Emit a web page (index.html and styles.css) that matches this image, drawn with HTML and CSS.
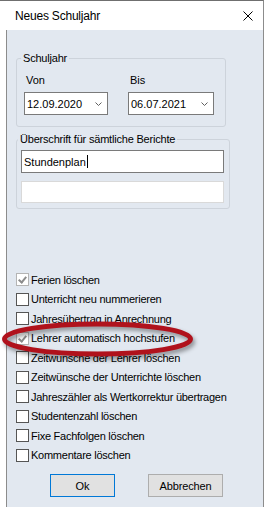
FILE: index.html
```html
<!DOCTYPE html>
<html lang="de">
  <head>
    <meta charset="UTF-8" />
    <meta name="viewport" content="width=device-width, initial-scale=1.0" />
    <title>Neues Schuljahr</title>
    <link rel="stylesheet" href="styles.css">
  </head>
  <body>
    <div class="window">
      <div class="titlebar">
        <span class="title">Neues Schuljahr</span>
        <svg class="close" width="10" height="10" viewBox="0 0 10 10">
          <path d="M0.5 0.5 L9.5 9.5 M9.5 0.5 L0.5 9.5" stroke="#000" stroke-width="1" fill="none" />
        </svg>
      </div>

      <div class="client">
        <fieldset class="group group-year">
          <legend>Schuljahr</legend>
          <div class="dates">
            <div class="date-field">
              <span class="caption">Von</span>
              <div class="combo combo-from">
                <span class="combo-text">12.09.2020</span>
                <span class="combo-arrow">
                  <svg width="7" height="4" viewBox="0 0 7 4"><path d="M0.5 0.5 L3.5 3.5 L6.5 0.5" stroke="#606060" fill="none" /></svg>
                </span>
              </div>
            </div>
            <div class="date-field">
              <span class="caption">Bis</span>
              <div class="combo combo-to">
                <span class="combo-text">06.07.2021</span>
                <span class="combo-arrow">
                  <svg width="7" height="4" viewBox="0 0 7 4"><path d="M0.5 0.5 L3.5 3.5 L6.5 0.5" stroke="#606060" fill="none" /></svg>
                </span>
              </div>
            </div>
          </div>
        </fieldset>

        <fieldset class="group group-heading">
          <legend>Überschrift für sämtliche Berichte</legend>
          <div class="textbox">Stundenplan<span class="caret"></span></div>
          <div class="textbox textbox-off"></div>
        </fieldset>

        <ul class="options">
          <li><span class="box box-checked"></span>Ferien löschen</li>
          <li><span class="box"></span>Unterricht neu nummerieren</li>
          <li><span class="box"></span>Jahresübertrag in Anrechnung</li>
          <li><span class="box box-checked"></span>Lehrer automatisch hochstufen</li>
          <li><span class="box"></span>Zeitwünsche der Lehrer löschen</li>
          <li><span class="box"></span>Zeitwünsche der Unterrichte löschen</li>
          <li><span class="box"></span>Jahreszähler als Wertkorrektur übertragen</li>
          <li><span class="box"></span>Studentenzahl löschen</li>
          <li><span class="box"></span>Fixe Fachfolgen löschen</li>
          <li><span class="box"></span>Kommentare löschen</li>
        </ul>

        <div class="buttons">
          <button type="button" class="btn btn-default">Ok</button>
          <button type="button" class="btn btn-cancel">Abbrechen</button>
        </div>
      </div>

      <!-- red marker drawn over the dialog -->
      <svg class="marker" width="200" height="46" viewBox="0 0 200 46">
        <ellipse cx="97.5" cy="21" rx="93" ry="15" fill="none" stroke="#b0121c" stroke-width="5" />
      </svg>
    </div>
  </body>
</html>
```

FILE: styles.css
```css
* {
  box-sizing: border-box;
}
body {
  margin: 0;
  background-color: #fff;
  font-family: "Liberation Sans", Arial, sans-serif;
  font-size: 11px;
  color: #000;
}
.window {
  position: relative;
  width: 264px;
  height: 507px;
  border-top: 1px solid #6f6f6f;
  border-right: 1px solid #8c8c8c;
  display: flex;
  flex-direction: column;
  overflow: hidden;
}
.titlebar {
  height: 29px;
  display: flex;
  align-items: center;
  justify-content: space-between;
  padding: 0 10px 0 15px;
  background-color: #fff;
}
.title {
  font-size: 12px;
  letter-spacing: -0.2px;
}
.close {
  display: block;
  margin-top: 1px;
}
.client {
  flex: 1;
  margin-left: 6px;
  border-left: 1px solid #8c8c8c;
  background-color: #e2e8f0;
}

/* group boxes */
.group {
  margin: 0 0 0 9px;
  border: 1px solid #cdd3db;
  border-radius: 3px;
  padding: 0 7px;
  min-width: 0;
}
.group legend {
  margin-left: -3px;
  padding: 0 2px;
  line-height: 13px;
  letter-spacing: -0.2px;
}
.group-year {
  width: 210px;
  margin-top: 22px;
  padding-top: 9px;
  padding-bottom: 11px;
}
.dates {
  display: flex;
  gap: 20px;
}
.date-field {
  display: flex;
  flex-direction: column;
  gap: 5px;
}
.caption {
  margin-left: 2px;
  line-height: 13px;
}
.combo {
  height: 23px;
  display: flex;
  align-items: center;
  justify-content: space-between;
  padding-left: 2px;
  border: 1px solid #7a7a7a;
  background-color: #fff;
}
.combo-from {
  width: 84px;
}
.combo-to {
  width: 86px;
}
.combo-arrow {
  width: 17px;
  display: flex;
  justify-content: center;
}
.combo-arrow svg {
  display: block;
}
.group-heading {
  width: 214px;
  margin-top: 6px;
  padding: 4px 4px 5px;
}
.textbox {
  width: 203px;
  height: 23px;
  display: flex;
  align-items: center;
  padding-left: 2px;
  border: 1px solid #7a7a7a;
  background-color: #fff;
}
.textbox-off {
  height: 22px;
  margin-top: 8px;
  border-color: #d9d9d9;
}
.caret {
  width: 1px;
  height: 13px;
  margin-left: 1px;
  background-color: #000;
}

/* check boxes */
.options {
  list-style: none;
  margin: 61px 0 0;
  padding: 0 0 0 9px;
}
.options li {
  height: 19.5px;
  display: flex;
  align-items: center;
  letter-spacing: -0.25px;
}
.box {
  width: 13px;
  height: 13px;
  margin-right: 2px;
  border: 1px solid #555;
  background-color: #fff;
  position: relative;
}
.box-checked {
  border-color: #b4b4b4;
}
.box-checked::after {
  content: "";
  position: absolute;
  left: 3px;
  top: 1px;
  width: 3px;
  height: 6px;
  border-right: 2px solid #8c8c8c;
  border-bottom: 2px solid #8c8c8c;
  transform: rotate(40deg);
}

/* buttons */
.buttons {
  display: flex;
  gap: 33px;
  margin: 9px 0 0 43px;
}
.btn {
  height: 23px;
  padding: 0;
  font-family: inherit;
  font-size: 11px;
  letter-spacing: -0.15px;
  color: #000;
  background-color: #e1e1e1;
  border: 1px solid #adadad;
}
.btn-default {
  width: 65px;
  border-color: #0078d7;
}
.btn-cancel {
  width: 75px;
}

.marker {
  position: absolute;
  left: 0;
  top: 317px;
  filter: drop-shadow(2px 3px 2px rgba(0, 0, 0, 0.4));
}
```
